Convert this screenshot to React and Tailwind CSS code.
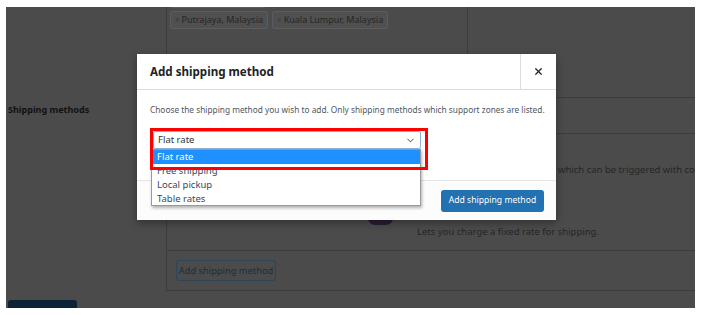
import { X, ChevronDown } from 'lucide-react';

const font = { fontFamily: '"Noto Sans", "Open Sans", sans-serif' };

const Tag = ({ label }) => (
  <span className="flex items-center h-[18px] px-[4px] border border-[#5c5c5c] bg-[#505050] rounded-[2px] text-[9px] text-[#262626] whitespace-nowrap">
    <span className="text-[8px] mr-[2px] text-[#3a3a3a]">×</span>
    {label}
  </span>
);

const AddShippingModal = () => (
  <div className="absolute left-[131px] top-[47px] w-[419px] h-[166px] bg-white flex flex-col shadow-[0_3px_8px_rgba(0,0,0,0.35)]">
    <div className="flex h-[36px] border-b border-[#dcdcde] shrink-0">
      <h2 className="flex-1 flex items-center pl-[13px] text-[11.6px] font-bold text-[#1d2327]">Add shipping method</h2>
      <button className="w-[36px] flex items-center justify-center border-l border-[#dcdcde] text-[#1d2327]">
        <X size={11} strokeWidth={2.6} />
      </button>
    </div>
    <div className="h-[90px] px-[13px] pt-[13px] shrink-0">
      <p className="text-[8.3px] text-[#50575e] leading-[13px] whitespace-nowrap">
        Choose the shipping method you wish to add. Only shipping methods which support zones are listed.
      </p>
    </div>
    <div className="flex-1 border-t border-[#e4e4e4] bg-[#fcfcfc] flex items-center justify-end pr-[12px]">
      <button className="h-[22px] w-[103px] rounded-[3px] bg-[#2271b1] text-white text-[8.6px]">Add shipping method</button>
    </div>

    {/* open select + its list */}
    <div className="absolute left-[16px] top-[77px] w-[268px] h-[18px] border border-[#8eb3d6] rounded-[2px] bg-white flex items-center justify-between px-[4px]">
      <span className="text-[9.5px] text-[#2c3338]">Flat rate</span>
      <ChevronDown size={11} strokeWidth={2} className="text-[#2c3338]" />
    </div>
    <ul className="absolute left-[14px] top-[95px] w-[270px] border border-[#9a9a9a] bg-white shadow-[1px_2px_3px_rgba(0,0,0,0.3)] text-[9.5px] text-[#34495e]">
      <li className="h-[14px] leading-[14px] pl-[5px] bg-[#1e90ff] text-white">Flat rate</li>
      <li className="h-[14px] leading-[14px] pl-[5px]">Free shipping</li>
      <li className="h-[14px] leading-[14px] pl-[5px]">Local pickup</li>
      <li className="h-[13px] leading-[13px] pl-[5px]">Table rates</li>
    </ul>
    <div className="absolute left-[13px] top-[74px] w-[278px] h-[42px] border-[3px] border-[#ff0000]" />
  </div>
);

export default function App() {
  return (
    <div className="w-[703px] h-[315px] bg-white pt-[7px] pl-[6px]" style={font}>
      <div className="relative w-[689px] h-[301px] bg-[#4b4b4b] overflow-hidden flex">
        <div className="w-[160px] shrink-0 flex flex-col">
          <div className="h-[96px]" />
          <span className="pl-[2px] text-[9px] font-bold text-[#121212]">Shipping methods</span>
          <div className="flex-1" />
          <div className="ml-[2px] w-[69px] h-[8px] bg-[#0b2237] rounded-t-[3px]" />
        </div>
        <div className="flex-1 flex flex-col">
          <div className="w-[302px] h-[60px] border-x border-[#3c3c3c] px-[3px] overflow-hidden">
            <div className="-mt-[18px] mb-[3px]">
              <span className="block w-[96px] h-[19px] border border-[#5c5c5c] rounded-[2px]" />
            </div>
            <div className="flex gap-[4px]">
              <Tag label="Putrajaya, Malaysia" />
              <Tag label="Kuala Lumpur, Malaysia" />
            </div>
          </div>
          <div className="h-[30px]" />
          <div className="h-[194px] border-l border-t border-[#3c3c3c] flex flex-col">
            <div className="h-[36px] border-b border-[#3c3c3c]" />
            <div className="h-[117px] border-b border-[#3c3c3c] relative">
              <span className="absolute left-[391px] top-[29px] text-[9.5px] text-[#262626] whitespace-nowrap">which can be triggered with coupons</span>
              <span className="absolute left-[201px] top-[77px] w-[25px] h-[14px] rounded-full bg-[#2a1d33]" />
              <span className="absolute left-[250px] top-[91px] text-[9.5px] text-[#262626] whitespace-nowrap">Lets you charge a fixed rate for shipping.</span>
            </div>
            <div className="h-[40px] border-b border-[#3c3c3c] flex items-center pl-[9px]">
              <span className="inline-flex items-center justify-center h-[21px] w-[100px] border border-[#2c455a] rounded-[3px] text-[9.3px] text-[#1c2e3d]">Add shipping method</span>
            </div>
          </div>
        </div>
        <AddShippingModal />
      </div>
    </div>
  );
}
